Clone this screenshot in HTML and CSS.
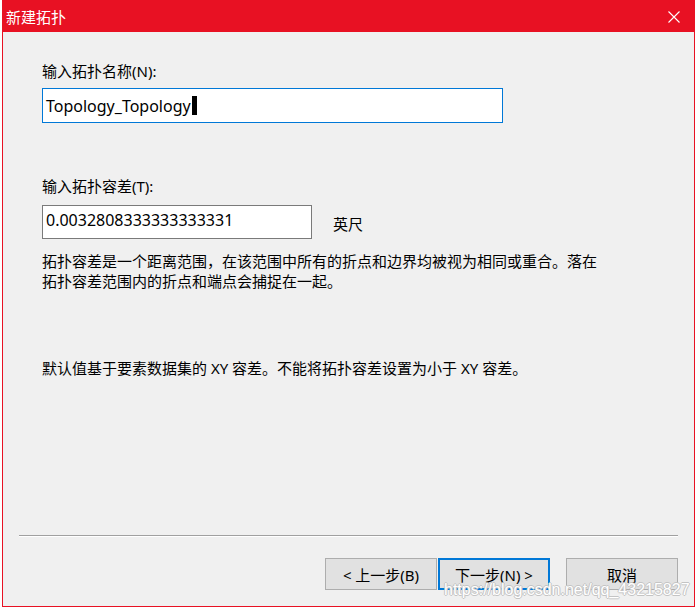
FILE: index.html
```html
<!DOCTYPE html>
<html lang="zh-CN">
<head>
    <meta charset="UTF-8">
    <meta name="viewport" content="width=device-width, initial-scale=1.0">
    <title>新建拓扑</title>
    <link rel="stylesheet" href="styles.css">
</head>
<body>
    <div class="window">
        <div class="titlebar">
            <span class="title">新建拓扑</span>
            <svg class="close" width="12" height="12" viewBox="0 0 12 12">
                <path d="M0.5 0.5 L11.5 11.5 M11.5 0.5 L0.5 11.5" stroke="#fff" stroke-width="1.1" fill="none"/>
            </svg>
        </div>
        <div class="content">
            <label class="field-label">输入拓扑名称(N):</label>
            <div class="textbox name-box">Topology_Topology<span class="caret"></span></div>

            <label class="field-label tol-label">输入拓扑容差(T):</label>
            <div class="tol-row">
                <div class="textbox tol-box">0.0032808333333333331</div>
                <span class="unit">英尺</span>
            </div>

            <p class="desc">拓扑容差是一个距离范围，在该范围中所有的折点和边界均被视为相同或重合。落在<br>拓扑容差范围内的折点和端点会捕捉在一起。</p>

            <p class="note">默认值基于要素数据集的 XY 容差。不能将拓扑容差设置为小于 XY 容差。</p>
        </div>
        <div class="footer">
            <div class="separator"></div>
            <div class="buttons">
                <button class="btn">&lt; 上一步(B)</button>
                <button class="btn default">下一步(N) &gt;</button>
                <button class="btn cancel">取消</button>
            </div>
        </div>
        <div class="watermark">https://blog.csdn.net/qq_43215827</div>
    </div>
</body>
</html>
```

FILE: styles.css
```css
html, body {
    margin: 0;
    padding: 0;
}

body {
    background: #fff;
    font-family: "Noto Sans", "Noto Sans CJK SC", sans-serif;
    font-size: 15px;
    color: #000;
    width: 697px;
    height: 610px;
    overflow: hidden;
}

.window {
    position: relative;
    margin-left: 2px;
    width: 691px;
    height: 605px;
    border: 1px solid #e81123;
    background: #f0f0f0;
    display: flex;
    flex-direction: column;
}

.titlebar {
    height: 31px;
    background: #e81123;
    color: #fff;
    display: flex;
    align-items: center;
    justify-content: space-between;
    padding: 0 14px 0 3px;
}

.title {
    font-size: 15px;
    line-height: 20px;
}

.content {
    flex: 1;
    padding: 29px 0 0 39px;
    display: flex;
    flex-direction: column;
    align-items: flex-start;
}

.field-label {
    display: block;
    line-height: 20px;
}

.textbox {
    box-sizing: border-box;
    background: #fff;
    border: 1px solid #7a7a7a;
    padding: 0 3px;
    font-size: 16px;
    display: flex;
    align-items: center;
}

.name-box {
    margin-top: 7px;
    width: 461px;
    height: 35px;
    border-color: #0078d7;
}

.caret {
    display: inline-block;
    width: 5px;
    height: 19px;
    background: #000;
    margin-left: 1px;
}

.tol-label {
    margin-top: 53px;
}

.tol-row {
    margin-top: 9px;
    display: flex;
    align-items: center;
}

.tol-box {
    width: 270px;
    height: 34px;
    padding-bottom: 4px;
}

.unit {
    margin-left: 21px;
    padding-top: 2px;
}

.desc {
    margin: 12px 0 0;
    line-height: 20px;
}

.note {
    margin: 67px 0 0;
    line-height: 20px;
}

.footer {
    padding: 0 16px 16px;
}

.separator {
    border-top: 1px solid #a0a0a0;
    border-bottom: 1px solid #fff;
}

.buttons {
    margin-top: 21px;
    display: flex;
    justify-content: flex-end;
}

.btn {
    box-sizing: border-box;
    width: 112px;
    height: 32px;
    background: #e1e1e1;
    border: 1px solid #adadad;
    font-family: "Noto Sans", "Noto Sans CJK SC", sans-serif;
    font-size: 15px;
    color: #000;
    padding: 0;
}

.btn.default {
    margin-left: 1px;
    border: 2px solid #0078d7;
}

.btn.cancel {
    margin-left: 16px;
}

/* blog watermark baked into the screenshot */
.watermark {
    position: absolute;
    left: 441px;
    top: 579px;
    font-family: "Liberation Sans", sans-serif;
    font-size: 16px;
    line-height: 20px;
    color: #fff;
    text-shadow: 1px 0 0 #c4c4c4, -1px 0 0 #c4c4c4, 0 1px 0 #c4c4c4, 0 -1px 0 #c4c4c4;
    white-space: nowrap;
}
```
